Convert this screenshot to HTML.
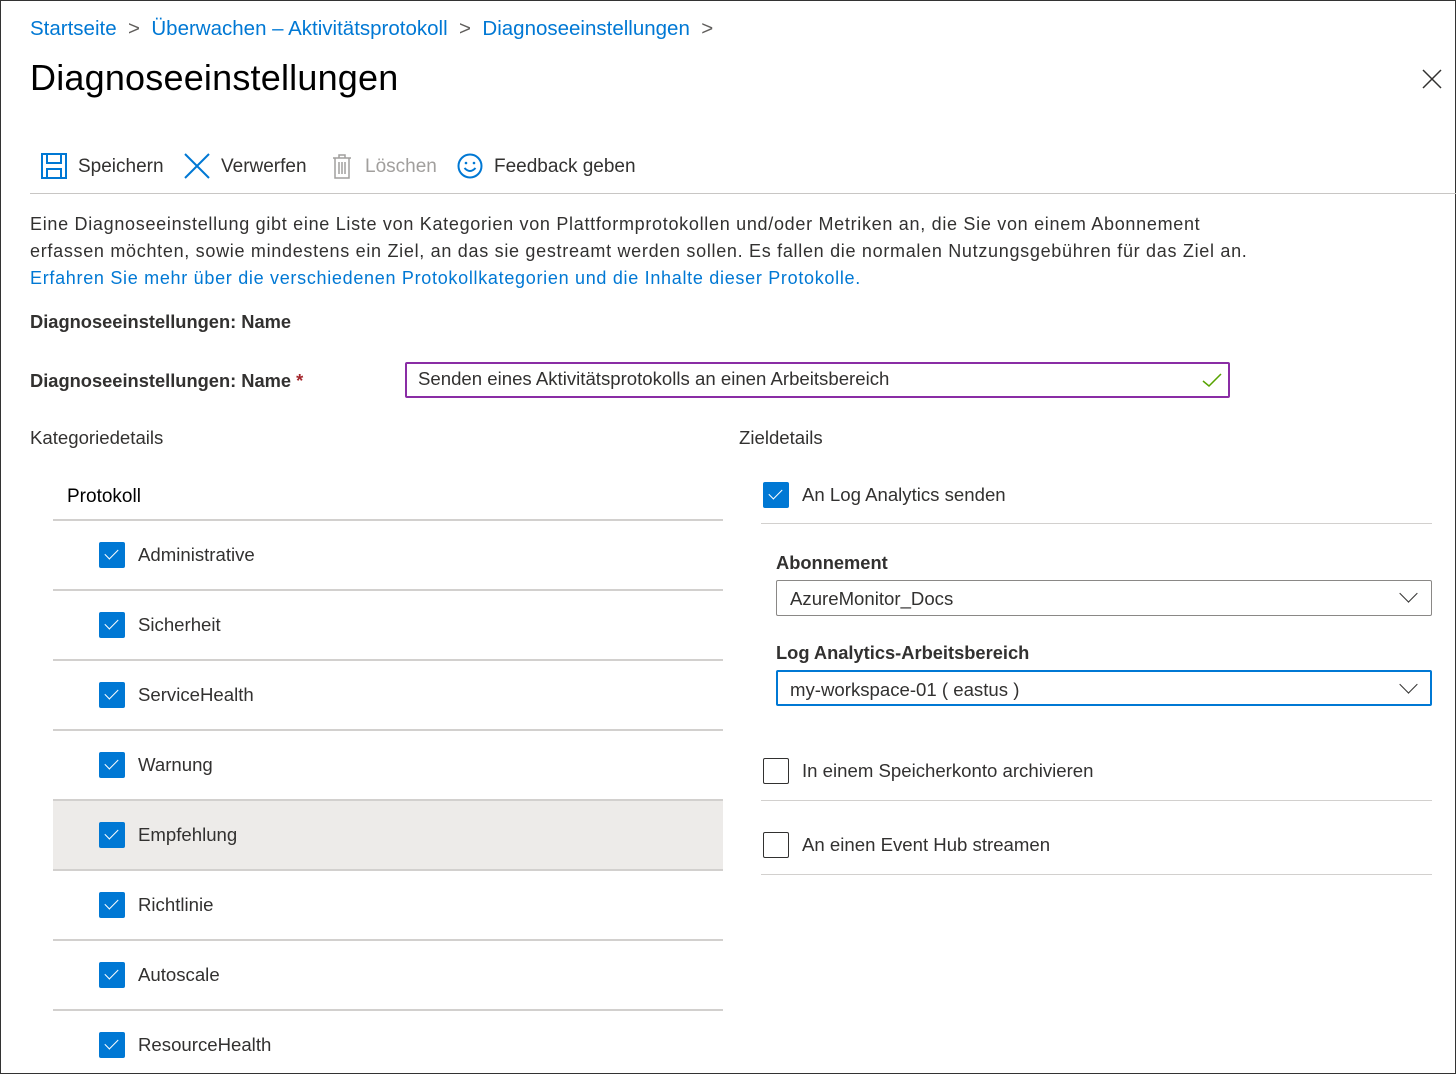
<!DOCTYPE html>
<html><head><meta charset="utf-8"><style>
*{box-sizing:border-box;margin:0;padding:0}
body{width:1456px;height:1074px;overflow:hidden;background:#fff;font-family:"Liberation Sans",sans-serif;color:#323130;position:relative;border:1px solid #333}
.a{position:absolute;white-space:nowrap}
.blue{color:#0078d4}
.f18{font-size:18.6px}
.cb{position:absolute;width:26px;height:26px;background:#0078d4;border-radius:2px}
.cb::after{content:"";position:absolute;left:9px;top:4px;width:6px;height:12px;border:solid #fff;border-width:0 1.5px 1.5px 0;transform:rotate(45deg)}
.ucb{position:absolute;width:26px;height:26px;border:1.5px solid #323130;border-radius:2px}
.hl{position:absolute;height:2px;background:#d2d0ce}
.chev{position:absolute;width:13px;height:13px;border:solid #323130;border-width:0 1.5px 1.5px 0;transform:rotate(45deg)}
</style></head><body>
<div class="a blue" style="left:29px;top:16px;font-size:20.5px">Startseite &nbsp;<span style="color:#605e5c">&gt;</span>&nbsp; Überwachen – Aktivitätsprotokoll &nbsp;<span style="color:#605e5c">&gt;</span>&nbsp; Diagnoseeinstellungen &nbsp;<span style="color:#605e5c">&gt;</span></div>
<div class="a" style="left:29px;top:56px;font-size:36px;color:#000;letter-spacing:0.2px">Diagnoseeinstellungen</div>
<svg class="a" style="left:1421px;top:68px" width="20" height="20"><path d="M1 1L19 19M19 1L1 19" stroke="#323130" stroke-width="1.5"/></svg>
<svg class="a" style="left:40px;top:152px" width="26" height="26"><rect x="1" y="1" width="24" height="24" fill="none" stroke="#0078d4" stroke-width="2"/><rect x="6" y="1" width="14" height="9" fill="none" stroke="#0078d4" stroke-width="2"/><rect x="6" y="16" width="14" height="9" fill="none" stroke="#0078d4" stroke-width="2"/></svg>
<div class="a" style="left:77px;top:155px;font-size:19px">Speichern</div>
<svg class="a" style="left:183px;top:152px" width="26" height="26"><path d="M1 1L25 25M25 1L1 25" stroke="#0078d4" stroke-width="2"/></svg>
<div class="a" style="left:220px;top:155px;font-size:19px">Verwerfen</div>
<svg class="a" style="left:331px;top:152px" width="20" height="26"><path d="M1 5H19M7 5V2H13V5M3 5V25H17V5M7 9V21M10 9V21M13 9V21" stroke="#a19f9d" stroke-width="1.5" fill="none"/></svg>
<div class="a" style="left:364px;top:155px;font-size:19px;color:#a19f9d">Löschen</div>
<svg class="a" style="left:456px;top:152px" width="26" height="26"><circle cx="13" cy="13" r="11.5" fill="none" stroke="#0078d4" stroke-width="2"/><circle cx="9" cy="10" r="1.3" fill="#0078d4"/><circle cx="17" cy="10" r="1.3" fill="#0078d4"/><path d="M7.5 15Q13 21 18.5 15" stroke="#0078d4" stroke-width="2" fill="none"/></svg>
<div class="a" style="left:493px;top:155px;font-size:19px">Feedback geben</div>
<div class="hl" style="left:29px;top:192px;width:1426px;height:1px;background:#c8c6c4"></div>
<div class="a" style="left:29px;top:210px;line-height:27px;font-size:18px;letter-spacing:0.7px">Eine Diagnoseeinstellung gibt eine Liste von Kategorien von Plattformprotokollen und/oder Metriken an, die Sie von einem Abonnement<br>erfassen möchten, sowie mindestens ein Ziel, an das sie gestreamt werden sollen. Es fallen die normalen Nutzungsgebühren für das Ziel an.<br><span class="blue">Erfahren Sie mehr über die verschiedenen Protokollkategorien und die Inhalte dieser Protokolle.</span></div>
<div class="a" style="left:29px;top:310px;font-weight:bold;font-size:18.3px">Diagnoseeinstellungen: Name</div>
<div class="a" style="left:29px;top:369px;font-weight:bold;font-size:18.3px">Diagnoseeinstellungen: Name <span style="color:#a4262c">*</span></div>
<div class="a" style="left:404px;top:361px;width:825px;height:36px;border:2px solid #8a2da5;border-radius:2px"></div>
<div class="a f18" style="left:417px;top:367px">Senden eines Aktivitätsprotokolls an einen Arbeitsbereich</div>
<svg class="a" style="left:1201px;top:371px" width="20" height="16"><path d="M1 9L7 14L19 2" stroke="#57a300" stroke-width="1.5" fill="none"/></svg>
<div class="a f18" style="left:29px;top:426px">Kategoriedetails</div>
<div class="a f18" style="left:738px;top:426px">Zieldetails</div>
<div class="a" style="left:66px;top:485px;color:#000;font-size:19px">Protokoll</div>
<div class="a" style="left:52px;top:799px;width:670px;height:70px;background:#edebe9"></div>
<div class="hl" style="left:52px;top:518px;width:670px"></div>
<div class="hl" style="left:52px;top:588px;width:670px"></div>
<div class="hl" style="left:52px;top:658px;width:670px"></div>
<div class="hl" style="left:52px;top:728px;width:670px"></div>
<div class="hl" style="left:52px;top:798px;width:670px"></div>
<div class="hl" style="left:52px;top:868px;width:670px"></div>
<div class="hl" style="left:52px;top:938px;width:670px"></div>
<div class="hl" style="left:52px;top:1008px;width:670px"></div>
<div class="cb" style="left:98px;top:541px"></div><div class="a f18" style="left:137px;top:543px">Administrative</div>
<div class="cb" style="left:98px;top:611px"></div><div class="a f18" style="left:137px;top:613px">Sicherheit</div>
<div class="cb" style="left:98px;top:681px"></div><div class="a f18" style="left:137px;top:683px">ServiceHealth</div>
<div class="cb" style="left:98px;top:751px"></div><div class="a f18" style="left:137px;top:753px">Warnung</div>
<div class="cb" style="left:98px;top:821px"></div><div class="a f18" style="left:137px;top:823px">Empfehlung</div>
<div class="cb" style="left:98px;top:891px"></div><div class="a f18" style="left:137px;top:893px">Richtlinie</div>
<div class="cb" style="left:98px;top:961px"></div><div class="a f18" style="left:137px;top:963px">Autoscale</div>
<div class="cb" style="left:98px;top:1031px"></div><div class="a f18" style="left:137px;top:1033px">ResourceHealth</div>
<div class="cb" style="left:762px;top:481px"></div><div class="a f18" style="left:801px;top:483px">An Log Analytics senden</div>
<div class="hl" style="left:760px;top:522px;width:671px;height:1px"></div>
<div class="a" style="left:775px;top:551px;font-weight:bold;font-size:18.3px">Abonnement</div>
<div class="a" style="left:775px;top:579px;width:656px;height:36px;border:1px solid #8a8886;border-radius:2px"></div>
<div class="a f18" style="left:789px;top:587px">AzureMonitor_Docs</div>
<div class="chev" style="left:1401px;top:586px"></div>
<div class="a" style="left:775px;top:641px;font-weight:bold;font-size:18.3px">Log Analytics-Arbeitsbereich</div>
<div class="a" style="left:775px;top:669px;width:656px;height:36px;border:2px solid #0078d4;border-radius:2px"></div>
<div class="a f18" style="left:789px;top:678px">my-workspace-01 ( eastus )</div>
<div class="chev" style="left:1401px;top:677px"></div>
<div class="ucb" style="left:762px;top:757px"></div><div class="a f18" style="left:801px;top:759px">In einem Speicherkonto archivieren</div>
<div class="hl" style="left:760px;top:799px;width:671px;height:1px"></div>
<div class="ucb" style="left:762px;top:831px"></div><div class="a f18" style="left:801px;top:833px">An einen Event Hub streamen</div>
<div class="hl" style="left:760px;top:873px;width:671px;height:1px"></div>
</body></html>
